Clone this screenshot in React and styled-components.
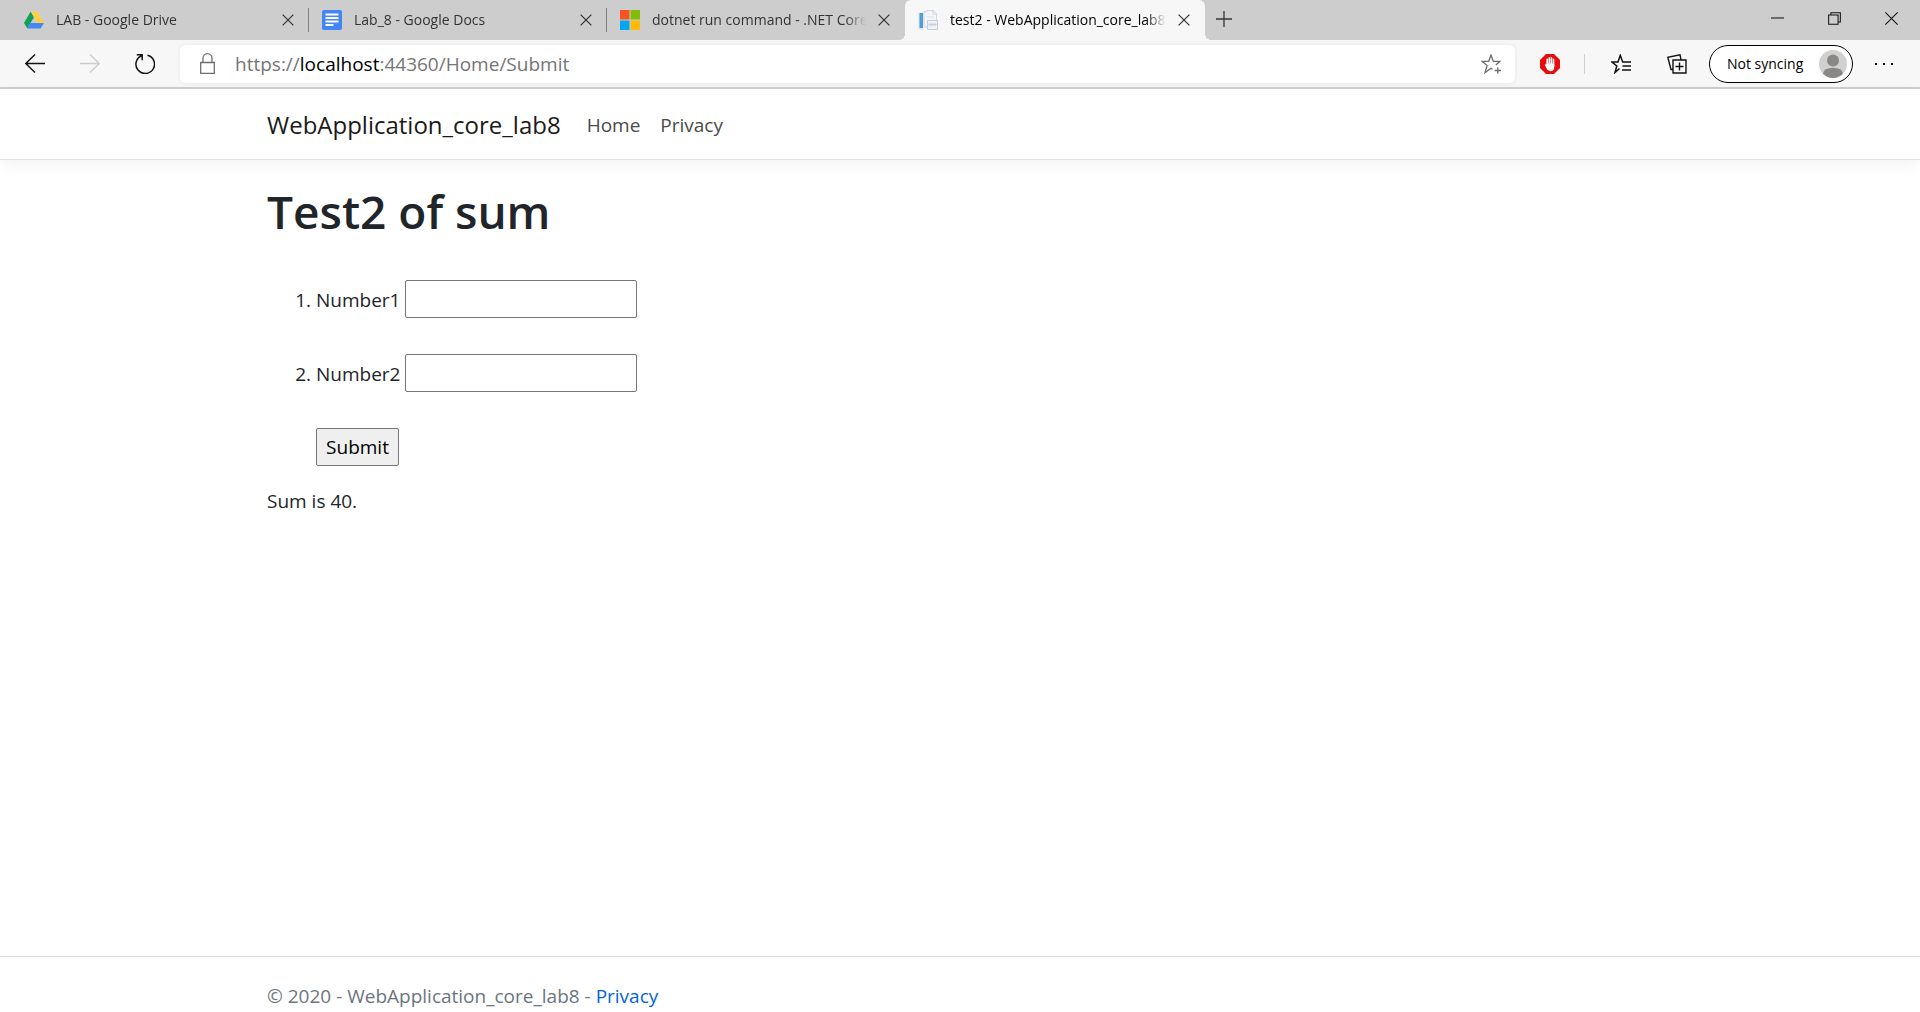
import React from 'react';
import styled, { createGlobalStyle } from 'styled-components';

const GlobalStyle = createGlobalStyle`
  *, *::before, *::after { box-sizing: border-box; }
  html, body, #root { height: 100%; }
  body {
    margin: 0;
    background: #fff;
    color: #212529;
    font-family: "Open Sans", "Noto Sans", sans-serif;
    font-size: 19px;
    line-height: 30px;
  }
  button, input { font-family: inherit; }
`;

const Shell = styled.div`
  min-height: 100%;
  display: flex;
  flex-direction: column;
`;

const TabStrip = styled.div`
  display: flex;
  height: 40px;
  padding-left: 11px;
  background: #cdcdcd;
`;

const Tab = styled.div`
  position: relative;
  display: flex;
  align-items: center;
  flex: 0 1 ${(p) => (p.$active ? 300 : 298)}px;
  min-width: 0;
  height: 40px;
  padding: 0 11px 0 13px;
  border-radius: 6px 6px 0 0;
  background: ${(p) => (p.$active ? '#f7f7f7' : 'transparent')};
  color: ${(p) => (p.$active ? '#000' : '#333')};

  &::before, &::after {
    content: '';
    display: ${(p) => (p.$active ? 'block' : 'none')};
    position: absolute;
    bottom: 0;
    width: 6px;
    height: 6px;
  }
  &::before {
    right: 100%;
    background: radial-gradient(circle at 0 0, transparent 6px, #f7f7f7 6px);
  }
  &::after {
    left: 100%;
    background: radial-gradient(circle at 100% 0, transparent 6px, #f7f7f7 6px);
  }
`;

const TabDivider = styled.span`
  flex: none;
  align-self: center;
  width: 1px;
  height: 24px;
  margin-left: -1px;
  background: #808080;
`;

const TabTitle = styled.span`
  flex: 1;
  min-width: 0;
  margin: 0 8px 0 12px;
  overflow: hidden;
  white-space: nowrap;
  font-size: 14px;
  line-height: 20px;
  mask-image: linear-gradient(to right, #000 calc(100% - 20px), transparent);
`;

const IconButton = styled.button`
  display: flex;
  align-items: center;
  justify-content: center;
  flex: none;
  width: ${(p) => p.$width || 20}px;
  height: ${(p) => p.$height || 20}px;
  padding: 0;
  border: 0;
  background: none;
  color: ${(p) => p.$color || '#111'};
`;

const WindowControls = styled.div`
  display: flex;
  align-items: flex-start;
  margin-left: auto;
`;

const Toolbar = styled.div`
  display: flex;
  align-items: center;
  height: 49px;
  padding: 0 6px 0 7px;
  border-bottom: 2px solid #cecece;
  background: #f7f7f7;
`;

const AddressBar = styled.div`
  display: flex;
  align-items: center;
  flex: 1;
  min-width: 0;
  height: 38px;
  margin: 0 17px 0 8px;
  padding: 0 14px 0 20px;
  border-radius: 6px;
  background: #fff;
  box-shadow: 0 0 5px rgba(0, 0, 0, 0.07);
`;

const Url = styled.span`
  flex: 1;
  margin-left: 20px;
  color: #757575;
  font-size: 19px;
  line-height: 24px;
`;

const UrlHost = styled.span`
  color: #000;
`;

const ToolDivider = styled.span`
  width: 1px;
  height: 20px;
  margin: 0 8px 0 16px;
  background: #d0d0d0;
`;

const ProfileButton = styled.button`
  display: flex;
  align-items: center;
  justify-content: space-between;
  flex: none;
  width: 144px;
  height: 38px;
  margin-left: 4px;
  padding: 0 5px 0 17px;
  border: 1px solid #000;
  border-radius: 19px;
  background: #fff;
  color: #000;
  font-size: 14px;
`;

const Container = styled.div`
  display: flex;
  flex-direction: ${(p) => (p.$row ? 'row' : 'column')};
  align-items: ${(p) => (p.$row ? 'center' : 'stretch')};
  width: 100%;
  max-width: 1424px;
  margin: 0 auto;
  padding: 0 19px;
`;

const SiteHeader = styled.header`
  padding: 16px 0 14px;
  border-bottom: 1px solid #dee2e6;
  box-shadow: 0 5px 15px rgba(0, 0, 0, 0.05);
`;

const Brand = styled.a`
  margin-right: 16px;
  color: #1a1a1a;
  font-size: 24px;
  line-height: 40px;
  text-decoration: none;
`;

const NavLink = styled.a`
  padding: 0 10px;
  color: #4a4a4a;
  text-decoration: none;
`;

const Main = styled.main`
  flex: 1;
`;

const Title = styled.h1`
  margin: 21px 0 11px;
  font-size: 46px;
  font-weight: 600;
  line-height: 60px;
`;

const Form = styled.form`
  margin: 0;
`;

const FieldList = styled.ol`
  display: flex;
  flex-direction: column;
  gap: 36px;
  margin: 28px 0 36px;
  padding-left: 49px;
`;

const Field = styled.li`
  height: 38px;
  line-height: 40px;
`;

const FieldLabel = styled.label`
  display: inline-block;
  width: 89px;
`;

const NumberInput = styled.input`
  width: 232px;
  height: 38px;
  padding: 1px 2px;
  border: 1px solid #767676;
  border-radius: 2px;
  background: #fff;
  font-size: 19px;
  vertical-align: top;
`;

const SubmitButton = styled.button`
  display: block;
  width: 83px;
  height: 38px;
  margin-left: 49px;
  padding: 0;
  border: 1px solid #767676;
  border-radius: 2px;
  background: #efefef;
  color: #000;
  font-size: 19px;
`;

const Result = styled.p`
  margin: 20px 0;
`;

const SiteFooter = styled.footer`
  padding: 24px 0 1px;
  border-top: 1px solid #dee2e6;
  color: #6c757d;
`;

const FooterLink = styled.a`
  color: #0366d6;
  text-decoration: none;
`;

const Icon = ({ size = 20, stroke = 1.4, children }) => (
  <svg width={size} height={size} viewBox="0 0 20 20" fill="none" stroke="currentColor" strokeWidth={stroke} aria-hidden="true">
    {children}
  </svg>
);

const DriveIcon = () => (
  <svg width="20" height="20" viewBox="0 0 20 20" aria-hidden="true">
    <path d="M6.7 1.5 0 13l3.4 5.6L10 7.2z" fill="#11a05b" />
    <path d="M6.7 1.5h6.6L20 13h-6.7z" fill="#ffcf44" />
    <path d="M6.7 13H20l-3.4 5.6H3.4z" fill="#4587f5" />
  </svg>
);

const DocsIcon = () => (
  <svg width="20" height="20" viewBox="0 0 20 20" aria-hidden="true">
    <rect width="20" height="20" rx="2" fill="#4285f4" />
    <path d="M3.5 4.5h13M3.5 8h13M3.5 11.5h13M3.5 15h8" stroke="#fff" strokeWidth="1.9" />
  </svg>
);

const MicrosoftIcon = () => (
  <svg width="20" height="20" viewBox="0 0 20 20" aria-hidden="true">
    <path d="M0 0h9.5v9.5H0z" fill="#f35325" />
    <path d="M10.5 0H20v9.5h-9.5z" fill="#81bc06" />
    <path d="M0 10.5h9.5V20H0z" fill="#05a6f0" />
    <path d="M10.5 10.5H20V20h-9.5z" fill="#ffba08" />
  </svg>
);

const PageIcon = () => (
  <svg width="20" height="20" viewBox="0 0 20 20" aria-hidden="true">
    <path d="M.5 2.5h5V19.5h-5z" fill="#dbe5ee" />
    <path d="M1.5 3h3.500v15H1.500z" fill="#4f9fd0" />
    <path d="M6 1.500h3v-1h6.500l3 3V17H6z" fill="#f3f5f8" stroke="#d3d8df" />
    <path d="M15 .5v3.500h3.500" fill="none" stroke="#ccd3dc" />
    <path d="M9.500 10.500h10v9h-10z" fill="#f0f2f6" stroke="#c8cdd8" />
    <path d="M10.500 14.500h8" stroke="#c8cdd8" strokeWidth="2" />
    <path d="M9 7h7" stroke="#dde2e8" />
  </svg>
);

const CloseIcon = () => (
  <Icon size={12} stroke={2}><path d="M1 1l18 18M19 1 1 19" /></Icon>
);

const tabs = [
  { title: 'LAB - Google Drive', icon: DriveIcon, divider: true },
  { title: 'Lab_8 - Google Docs', icon: DocsIcon, divider: true },
  { title: 'dotnet run command - .NET Core', icon: MicrosoftIcon },
  { title: 'test2 - WebApplication_core_lab8', icon: PageIcon, active: true },
];

function BrowserTabs() {
  return (
    <TabStrip>
      {tabs.map(({ title, icon: TabIcon, active, divider }) => (
        <React.Fragment key={title}>
          <Tab $active={active}>
            <TabIcon />
            <TabTitle>{title}</TabTitle>
            <IconButton aria-label={`Close ${title}`} $color="#333"><CloseIcon /></IconButton>
          </Tab>
          {divider && <TabDivider />}
        </React.Fragment>
      ))}
      <IconButton aria-label="New tab" $width={38} $height={38} $color="#333">
        <Icon size={16} stroke={1.6}><path d="M10 0v20M0 10h20" /></Icon>
      </IconButton>
      <WindowControls>
        <IconButton aria-label="Minimize" $width={57} $height={36}>
          <Icon size={13} stroke={1.6}><path d="M0 9.200h20" /></Icon>
        </IconButton>
        <IconButton aria-label="Restore" $width={57} $height={36}>
          <Icon size={13} stroke={1.6}><path d="M1 4.500h14.500V19H1zM4.500 4.500V1H19v14.500h-3.500" /></Icon>
        </IconButton>
        <IconButton aria-label="Close window" $width={57} $height={36}>
          <Icon size={13} stroke={1.6}><path d="M.5.5l19 19M19.500.5l-19 19" /></Icon>
        </IconButton>
      </WindowControls>
    </TabStrip>
  );
}

function BrowserToolbar() {
  return (
    <Toolbar>
      <IconButton aria-label="Back" $width={55}>
        <Icon><path d="M20 9.500H.8M10 .5.8 9.500l9.200 9" /></Icon>
      </IconButton>
      <IconButton aria-label="Forward" $width={55} $color="#ccc">
        <Icon><path d="M0 9.500h19.200M10 .5l9.200 9-9.200 9" /></Icon>
      </IconButton>
      <IconButton aria-label="Refresh" $width={55}>
        <Icon stroke={1.5}><path d="M12.500 1.200A9.300 9.300 0 1 1 6.500 1.700M1.800.8h5.400v5.400" /></Icon>
      </IconButton>
      <AddressBar>
        <svg width="15" height="21" viewBox="0 0 15 21" fill="none" stroke="#6e6e6e" strokeWidth="1.3" aria-hidden="true">
          <path d="M.7 9.500h13.600v10.800H.7zM3 9.500V5.200a4.500 4.500 0 0 1 9 0v4.300" />
        </svg>
        <Url>https://<UrlHost>localhost</UrlHost>:44360/Home/Submit</Url>
        <IconButton aria-label="Add to favorites" $color="#6e6e6e">
          <Icon stroke={1.3}>
            <path d="M14.800 11 19 7.300h-6.700L10 1 7.700 7.300H1l5.100 4.200L4 18.700l6-4.500 1.500 1.100M16.800 13.300v6.400M13.600 16.500H20" />
          </Icon>
        </IconButton>
      </AddressBar>
      <IconButton aria-label="AdBlock" $width={36}>
        <svg width="20" height="20" viewBox="0 0 20 20" aria-hidden="true">
          <path d="M6 0h8l6 6v8l-6 6H6l-6-6V6z" fill="#e80c0c" />
          <path d="M7.200 5.200v6M9.300 3.700v7M11.400 3.700v7M13.500 5.200v7" stroke="#fff" strokeWidth="1.600" strokeLinecap="round" />
          <path d="M6.400 9.500h7.900v3q0 4.700-4 4.700-2.800 0-3.900-2.900L4.700 10.600q1-.8 1.700.5z" fill="#fff" />
        </svg>
      </IconButton>
      <ToolDivider />
      <IconButton aria-label="Favorites" $width={56}>
        <Icon stroke={1.5}>
          <path d="M20 8h-8.300L9.300 1.300 7 8H1l4.800 4L4 18.500l4.500-4M11.500 12H20M11 16h9" />
        </Icon>
      </IconButton>
      <IconButton aria-label="Collections" $width={56}>
        <Icon stroke={1.4}>
          <path d="M6 6h13v13H6zM12.500 8.500v8M8.500 12.500h8M6 15.500H4L.8 3.200 13 .8l1 5" />
        </Icon>
      </IconButton>
      <ProfileButton>
        Not syncing
        <svg width="28" height="28" viewBox="0 0 28 28" aria-hidden="true">
          <circle cx="14" cy="14" r="14" fill="#d2d0ce" />
          <circle cx="14" cy="10.500" r="6" fill="#8a8886" />
          <path d="M4 23.800q1-6 10-6t10 6a14 14 0 0 1-20 0" fill="#8a8886" />
        </svg>
      </ProfileButton>
      <IconButton aria-label="Settings and more" $width={61}>
        <Icon><path d="M1 9h2v2H1zM9 9h2v2H9zM17 9h2v2h-2z" fill="currentColor" stroke="none" /></Icon>
      </IconButton>
    </Toolbar>
  );
}

export default function App() {
  return (
    <Shell>
      <GlobalStyle />
      <BrowserTabs />
      <BrowserToolbar />
      <SiteHeader>
        <Container as="nav" $row>
          <Brand href="#">WebApplication_core_lab8</Brand>
          <NavLink href="#">Home</NavLink>
          <NavLink href="#">Privacy</NavLink>
        </Container>
      </SiteHeader>
      <Main>
        <Container>
          <Title>Test2 of sum</Title>
          <Form onSubmit={(e) => e.preventDefault()}>
            <FieldList>
              <Field>
                <FieldLabel htmlFor="number1">Number1</FieldLabel>
                <NumberInput id="number1" type="text" />
              </Field>
              <Field>
                <FieldLabel htmlFor="number2">Number2</FieldLabel>
                <NumberInput id="number2" type="text" />
              </Field>
            </FieldList>
            <SubmitButton type="submit">Submit</SubmitButton>
          </Form>
          <Result>Sum is 40.</Result>
        </Container>
      </Main>
      <SiteFooter>
        <Container>
          <span>© 2020 - WebApplication_core_lab8 - <FooterLink href="#">Privacy</FooterLink></span>
        </Container>
      </SiteFooter>
    </Shell>
  );
}
